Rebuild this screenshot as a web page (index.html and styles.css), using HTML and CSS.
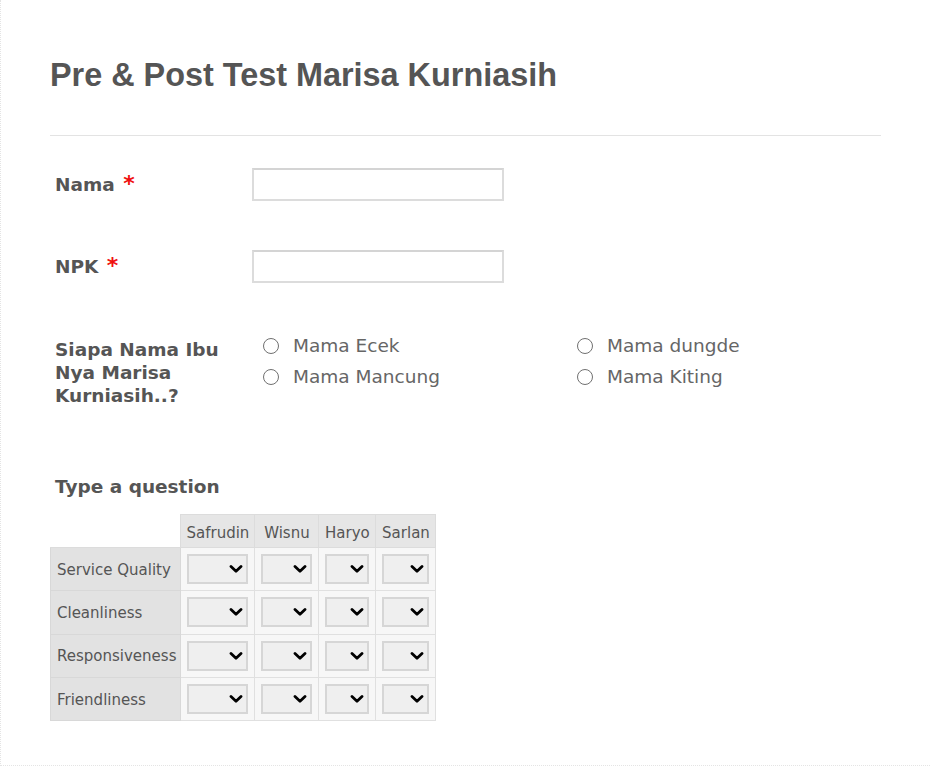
FILE: index.html
```html
<!DOCTYPE html>
<html>
<head>
<meta charset="utf-8">
<link rel="stylesheet" href="styles.css">
</head>
<body>
<div class="page">
  <div class="form-header">
    <h1 class="form-title">Pre &amp; Post Test Marisa Kurniasih</h1>
  </div>
  <ul class="form-list">
    <li class="form-line line-text first">
      <label class="form-label">Nama <span class="req">*</span></label>
      <div class="form-input"><input type="text" class="textbox"></div>
    </li>
    <li class="form-line line-text">
      <label class="form-label">NPK <span class="req">*</span></label>
      <div class="form-input"><input type="text" class="textbox"></div>
    </li>
    <li class="form-line line-radio">
      <label class="form-label label-radio">Siapa Nama Ibu Nya Marisa Kurniasih..?</label>
      <div class="radio-grid">
        <label class="radio-item"><input type="radio" name="ibu" class="radio"><span>Mama Ecek</span></label>
        <label class="radio-item"><input type="radio" name="ibu" class="radio"><span>Mama dungde</span></label>
        <label class="radio-item"><input type="radio" name="ibu" class="radio"><span>Mama Mancung</span></label>
        <label class="radio-item"><input type="radio" name="ibu" class="radio"><span>Mama Kiting</span></label>
      </div>
    </li>
    <li class="form-line line-matrix">
      <label class="form-label label-top">Type a question</label>
      <table class="matrix">
        <thead>
          <tr>
            <th class="corner"></th>
            <th class="col-a">Safrudin</th>
            <th class="col-b">Wisnu</th>
            <th class="col-c">Haryo</th>
            <th class="col-d">Sarlan</th>
          </tr>
        </thead>
        <tbody>
          <tr>
            <th class="row-label">Service Quality</th>
            <td><span class="sel-wrap"><select class="sel"><option></option></select><svg class="chev" viewBox="0 0 14 8" width="14" height="8"><path d="M2 1.5 L7 6.2 L12 1.5"/></svg></span></td>
            <td><span class="sel-wrap"><select class="sel"><option></option></select><svg class="chev" viewBox="0 0 14 8" width="14" height="8"><path d="M2 1.5 L7 6.2 L12 1.5"/></svg></span></td>
            <td><span class="sel-wrap"><select class="sel"><option></option></select><svg class="chev" viewBox="0 0 14 8" width="14" height="8"><path d="M2 1.5 L7 6.2 L12 1.5"/></svg></span></td>
            <td><span class="sel-wrap"><select class="sel"><option></option></select><svg class="chev" viewBox="0 0 14 8" width="14" height="8"><path d="M2 1.5 L7 6.2 L12 1.5"/></svg></span></td>
          </tr>
          <tr>
            <th class="row-label">Cleanliness</th>
            <td><span class="sel-wrap"><select class="sel"><option></option></select><svg class="chev" viewBox="0 0 14 8" width="14" height="8"><path d="M2 1.5 L7 6.2 L12 1.5"/></svg></span></td>
            <td><span class="sel-wrap"><select class="sel"><option></option></select><svg class="chev" viewBox="0 0 14 8" width="14" height="8"><path d="M2 1.5 L7 6.2 L12 1.5"/></svg></span></td>
            <td><span class="sel-wrap"><select class="sel"><option></option></select><svg class="chev" viewBox="0 0 14 8" width="14" height="8"><path d="M2 1.5 L7 6.2 L12 1.5"/></svg></span></td>
            <td><span class="sel-wrap"><select class="sel"><option></option></select><svg class="chev" viewBox="0 0 14 8" width="14" height="8"><path d="M2 1.5 L7 6.2 L12 1.5"/></svg></span></td>
          </tr>
          <tr>
            <th class="row-label">Responsiveness</th>
            <td><span class="sel-wrap"><select class="sel"><option></option></select><svg class="chev" viewBox="0 0 14 8" width="14" height="8"><path d="M2 1.5 L7 6.2 L12 1.5"/></svg></span></td>
            <td><span class="sel-wrap"><select class="sel"><option></option></select><svg class="chev" viewBox="0 0 14 8" width="14" height="8"><path d="M2 1.5 L7 6.2 L12 1.5"/></svg></span></td>
            <td><span class="sel-wrap"><select class="sel"><option></option></select><svg class="chev" viewBox="0 0 14 8" width="14" height="8"><path d="M2 1.5 L7 6.2 L12 1.5"/></svg></span></td>
            <td><span class="sel-wrap"><select class="sel"><option></option></select><svg class="chev" viewBox="0 0 14 8" width="14" height="8"><path d="M2 1.5 L7 6.2 L12 1.5"/></svg></span></td>
          </tr>
          <tr>
            <th class="row-label">Friendliness</th>
            <td><span class="sel-wrap"><select class="sel"><option></option></select><svg class="chev" viewBox="0 0 14 8" width="14" height="8"><path d="M2 1.5 L7 6.2 L12 1.5"/></svg></span></td>
            <td><span class="sel-wrap"><select class="sel"><option></option></select><svg class="chev" viewBox="0 0 14 8" width="14" height="8"><path d="M2 1.5 L7 6.2 L12 1.5"/></svg></span></td>
            <td><span class="sel-wrap"><select class="sel"><option></option></select><svg class="chev" viewBox="0 0 14 8" width="14" height="8"><path d="M2 1.5 L7 6.2 L12 1.5"/></svg></span></td>
            <td><span class="sel-wrap"><select class="sel"><option></option></select><svg class="chev" viewBox="0 0 14 8" width="14" height="8"><path d="M2 1.5 L7 6.2 L12 1.5"/></svg></span></td>
          </tr>
        </tbody>
      </table>
    </li>
  </ul>
</div>
</body>
</html>
```

FILE: styles.css
```css
html, body {
  margin: 0;
  padding: 0;
  background: #fff;
}

body {
  font-family: "DejaVu Sans", Verdana, sans-serif;
  color: #555;
}

.page {
  box-sizing: border-box;
  width: 940px;
  height: 766px;
  border-left: 1px dotted #e4e4e4;
  border-bottom: 1px dotted #e4e4e4;
  padding: 0 49px 0 49px;
}

.form-header {
  padding-top: 57px;
  padding-bottom: 41px;
  border-bottom: 1px solid #e3e3e3;
  width: 831px;
}

.form-title {
  margin: 0;
  font-family: "Liberation Sans", Arial, sans-serif;
  font-weight: bold;
  font-size: 32.4px;
  line-height: 37px;
  color: #555;
}

.form-list {
  list-style: none;
  margin: 0;
  padding: 0;
}

.form-line {
  display: grid;
  grid-template-columns: 202px 1fr;
  align-items: start;
}

.line-text.first {
  margin-top: 32px;
}

.line-text + .line-text {
  margin-top: 49px;
}

.form-label {
  padding-left: 5px;
  font-weight: bold;
  font-size: 18.5px;
  line-height: 23px;
  color: #555;
}

.line-text .form-label {
  padding-top: 5px;
}

.req {
  margin-left: 2px;
  font-size: 22px;
  line-height: 10px;
  color: #f01010;
}

.textbox {
  box-sizing: border-box;
  display: block;
  width: 252px;
  height: 33px;
  margin: 0;
  border: 2px solid #dcdcdc;
  border-top-color: #d4d4d4;
  background: #fff;
  outline: none;
}

.line-radio {
  margin-top: 47px;
}

.label-radio {
  width: 175px;
  padding-top: 8px;
}

.radio-grid {
  display: grid;
  grid-template-columns: 314px 314px;
  padding-left: 10px;
}

.radio-item {
  display: flex;
  align-items: center;
  height: 31px;
  font-size: 18.5px;
  color: #666;
}

.radio {
  appearance: none;
  -webkit-appearance: none;
  box-sizing: border-box;
  width: 16px;
  height: 16px;
  margin: 0 14px 0 1px;
  border: 1px solid #707070;
  border-radius: 50%;
  background: #fff;
}

.line-matrix {
  display: block;
  margin-top: 68px;
}

.label-top {
  display: block;
  margin-bottom: 16px;
}

.matrix {
  border-collapse: collapse;
  font-size: 15px;
  color: #555;
}

.matrix th {
  font-weight: normal;
}

.matrix thead th {
  height: 28px;
  padding: 4px 4px 0;
  background: #e6e6e6;
  border: 1px solid #dcdcdc;
  text-align: center;
}

.matrix thead th.corner {
  background: none;
  border: none;
  border-bottom: 1px solid #dcdcdc;
}

.col-a { width: 65px; }
.col-b { width: 55px; }
.col-c { width: 48px; }
.col-d { width: 51px; }

.row-label {
  width: 117px;
  height: 41.3px;
  padding: 1px 4px 0 6px;
  text-align: left;
  background: #e2e2e2;
  border: 1px solid #d8d8d8;
  white-space: nowrap;
}

.matrix td {
  padding: 0 6px;
  background: #f7f7f7;
  border: 1px solid #e0e0e0;
}

.sel-wrap {
  position: relative;
  display: block;
}

.sel {
  appearance: none;
  -webkit-appearance: none;
  box-sizing: border-box;
  display: block;
  width: 100%;
  height: 30px;
  margin: 0;
  border: 2px solid #d6d6d6;
  border-radius: 0;
  background-color: #efefef;
  color: #000;
  font-size: 15px;
}

.chev {
  position: absolute;
  right: 5px;
  top: 11px;
  pointer-events: none;
  fill: none;
  stroke: #000;
  stroke-width: 2.8;
  stroke-linecap: round;
  stroke-linejoin: round;
}
```
